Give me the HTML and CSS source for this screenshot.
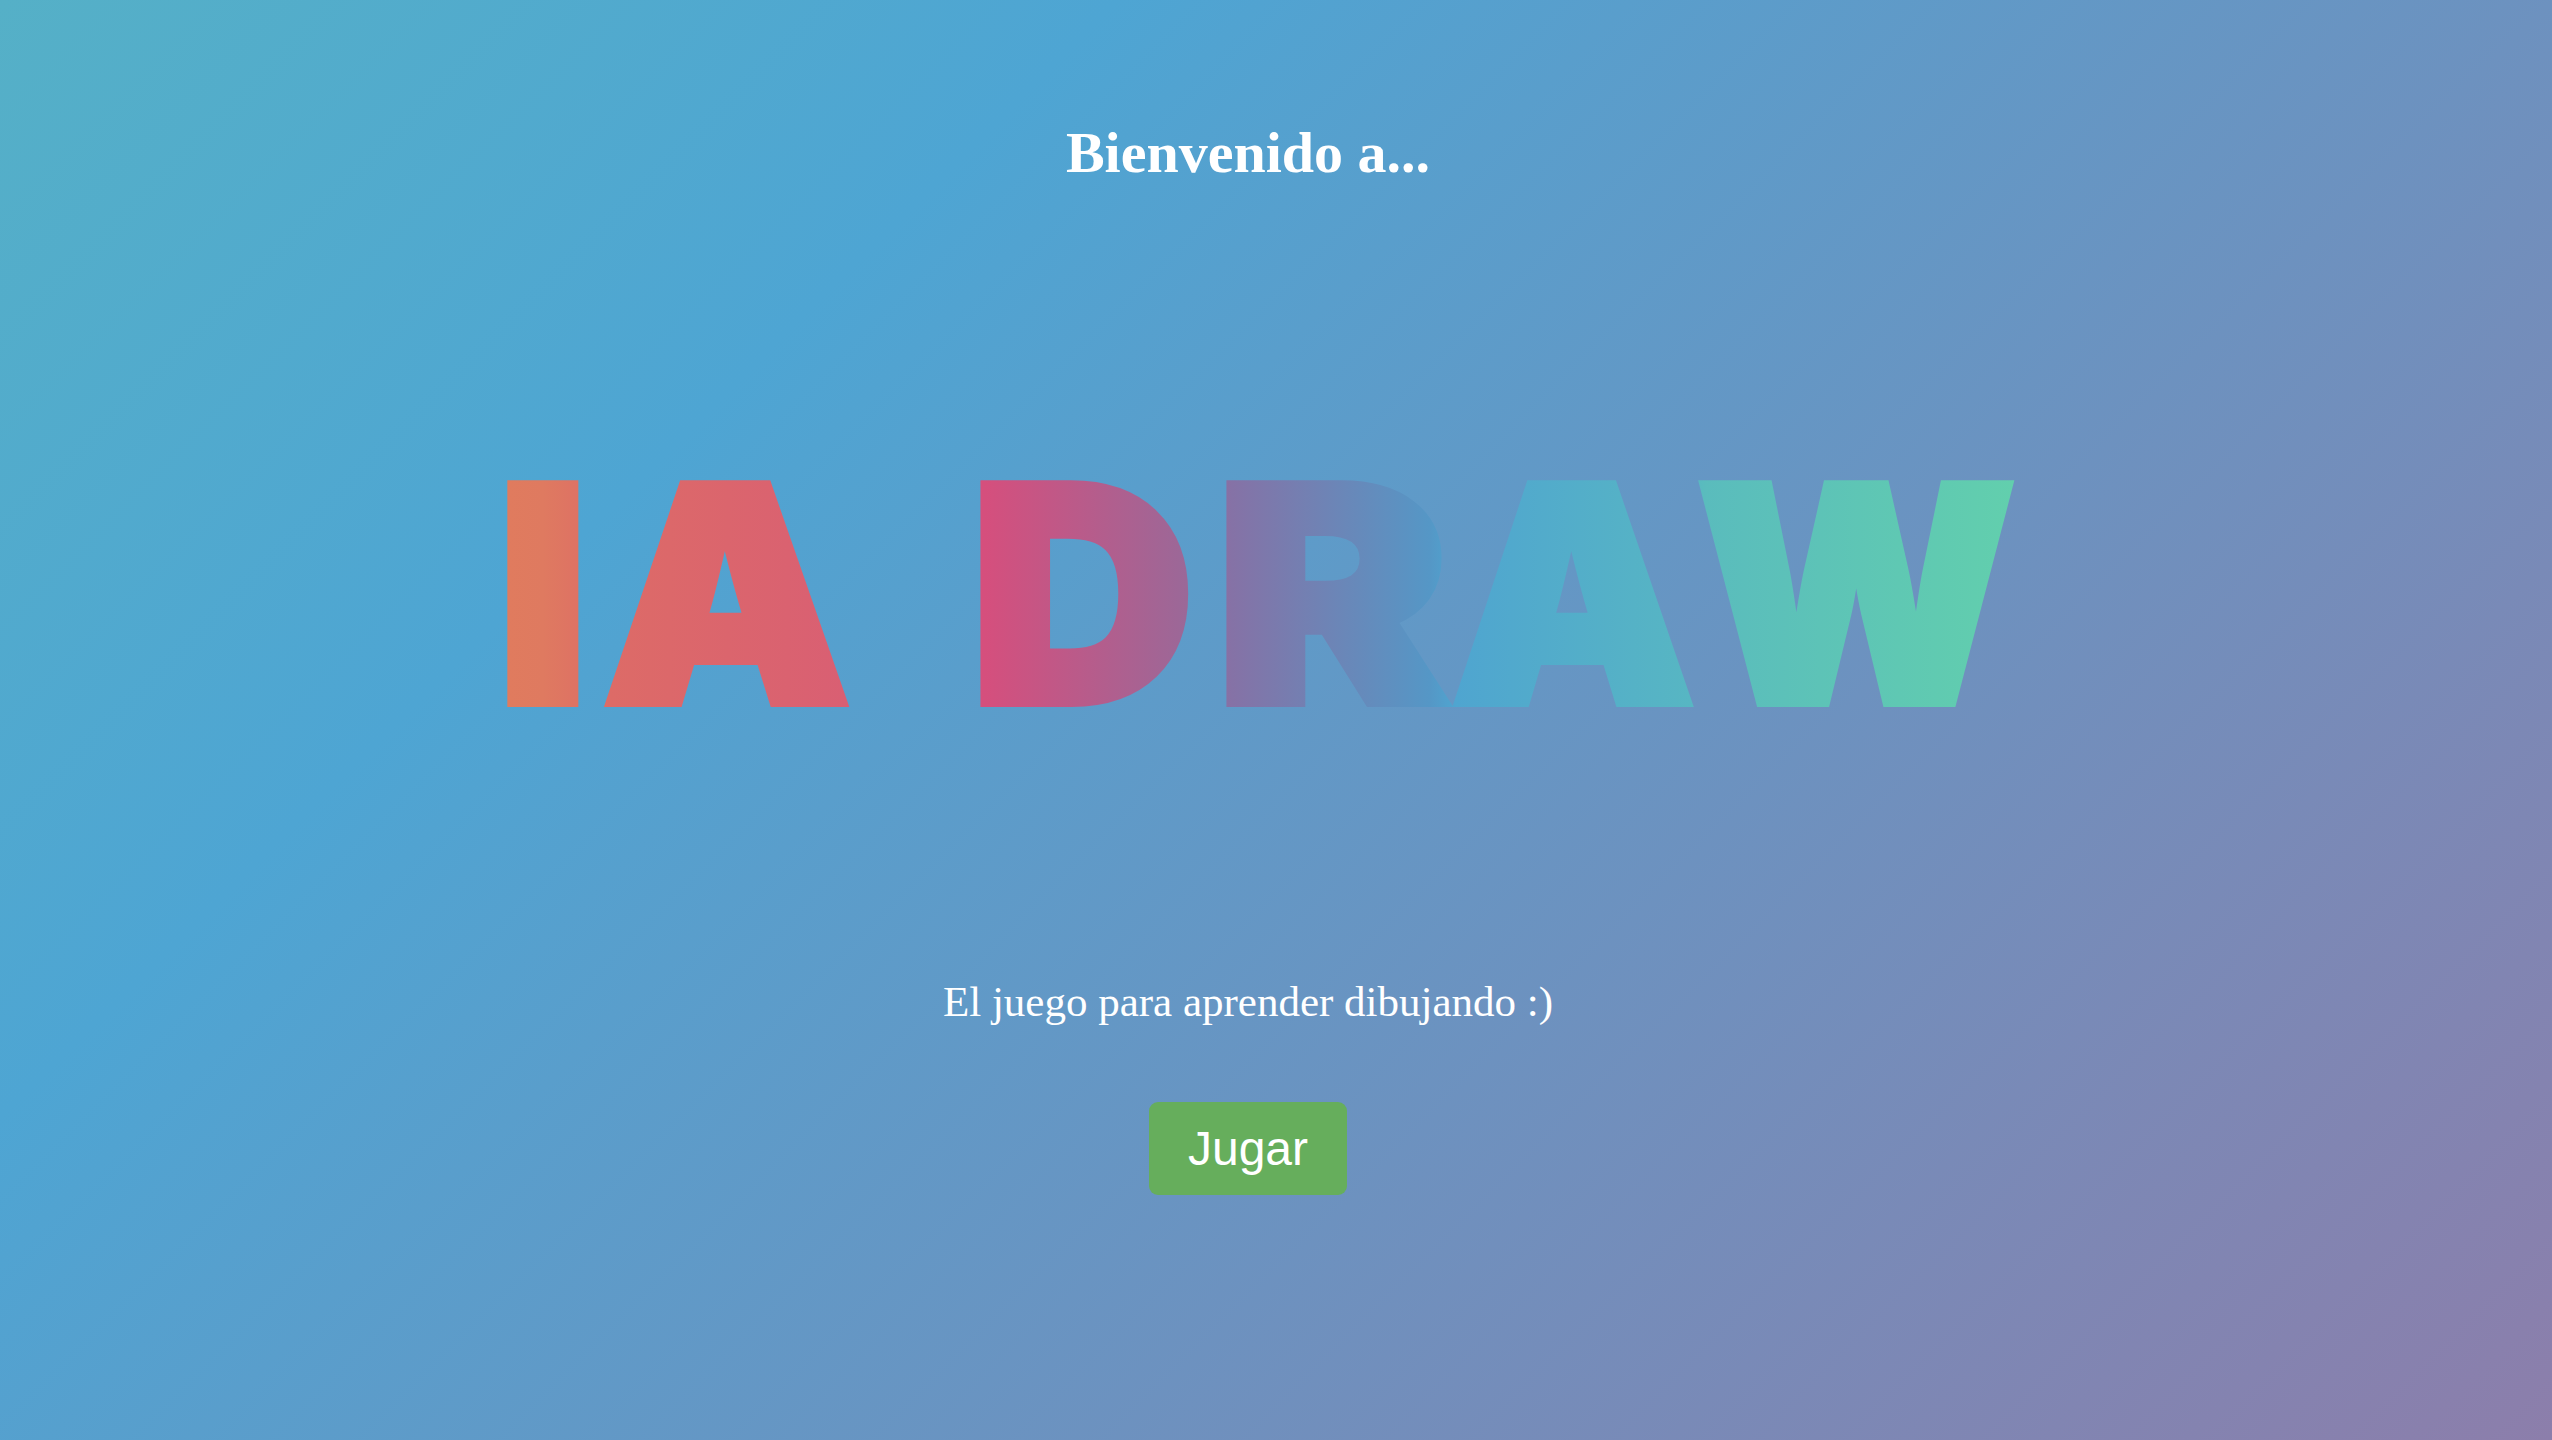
FILE: index.html
```html
<!DOCTYPE html>
<html lang="es">
<head>
<meta charset="utf-8">
<title>IA DRAW</title>
<link rel="stylesheet" href="styles.css">
</head>
<body>
<main class="page">
  <h1 class="welcome">Bienvenido a...</h1>
  <svg class="logo" width="1600" height="300" viewBox="0 0 1600 300" aria-label="IA DRAW">
    <defs>
      <linearGradient id="logoGrad" gradientUnits="userSpaceOnUse" x1="60" y1="0" x2="1566" y2="0">
        <stop offset="0" stop-color="#e07b5e"/>
        <stop offset="0.023" stop-color="#df7a60"/>
        <stop offset="0.068" stop-color="#dd6b67"/>
        <stop offset="0.224" stop-color="#d95f73"/>
        <stop offset="0.317" stop-color="#d54f7d"/>
        <stop offset="0.450" stop-color="#9b6898"/>
        <stop offset="0.481" stop-color="#8572a6"/>
        <stop offset="0.612" stop-color="#5597c6"/>
        <stop offset="0.629" stop-color="#4fa5d0"/>
        <stop offset="0.785" stop-color="#57b6c3"/>
        <stop offset="0.795" stop-color="#5abcbd"/>
        <stop offset="1" stop-color="#62cfad"/>
      </linearGradient>
    </defs>
    <text class="logo-text" y="263" fill="url(#logoGrad)" stroke="url(#logoGrad)"><tspan x="48.7" textLength="92.3" lengthAdjust="spacingAndGlyphs">I</tspan><tspan x="154.6" textLength="248" lengthAdjust="spacingAndGlyphs">A</tspan> <tspan x="522" textLength="224.7" lengthAdjust="spacingAndGlyphs">D</tspan><tspan x="766.6" textLength="235.4" lengthAdjust="spacingAndGlyphs">R</tspan><tspan x="1003" textLength="244" lengthAdjust="spacingAndGlyphs">A</tspan><tspan x="1248.6" textLength="319.3" lengthAdjust="spacingAndGlyphs">W</tspan></text>
  </svg>
  <p class="tagline">El juego para aprender dibujando :)</p>
  <button class="play" type="button">Jugar</button>
</main>
</body>
</html>
```
FILE: styles.css
```css
html, body {
  margin: 0;
  padding: 0;
}

body {
  min-height: 100vh;
  background: linear-gradient(135deg, #55b0c7 0%, #4ea5d3 28%, #8c7eab 100%);
  overflow: hidden;
}

.page {
  box-sizing: border-box;
  min-height: 100vh;
  display: flex;
  flex-direction: column;
  align-items: center;
  padding: 120px 56px 0 0;
}

.welcome {
  margin: 0;
  font-family: "Liberation Serif", "Times New Roman", serif;
  font-weight: 700;
  font-size: 58px;
  line-height: 66px;
  color: #ffffff;
}

.logo {
  display: block;
  margin-top: 254px;
  overflow: visible;
}

.logo-text {
  font-family: Inter, "Liberation Sans", sans-serif;
  font-weight: 900;
  font-size: 300.5px;
  stroke-width: 8px;
  stroke-linejoin: miter;
  stroke-miterlimit: 2;
}

.tagline {
  margin: 238px 0 0;
  font-family: "Liberation Serif", "Times New Roman", serif;
  font-weight: 400;
  font-size: 43px;
  line-height: 48px;
  color: #ffffff;
}

.play {
  margin-top: 76px;
  padding: 19px 38.5px;
  border: none;
  border-radius: 9px;
  background: #66ae5c;
  color: #ffffff;
  font-family: "Liberation Sans", Arial, sans-serif;
  font-size: 48px;
  line-height: 55px;
  cursor: pointer;
}
```
